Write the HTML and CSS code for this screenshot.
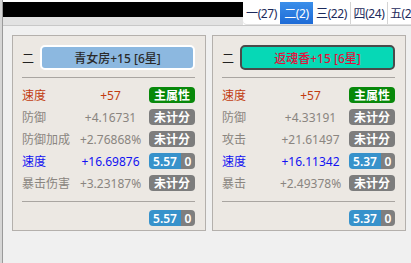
FILE: index.html
```html
<!DOCTYPE html>
<html lang="zh-CN">
<head>
  <meta charset="UTF-8">
  <title>御魂对比</title>
  <link rel="stylesheet" href="styles.css">
</head>
<body>
  <div class="edge"></div>
  <div class="main">
    <!-- 顶部栏 + 页签 -->
    <div class="header">
      <div class="header-left">
        <div class="blackbar"></div>
        <div class="band"></div>
      </div>
      <div class="tabs">
        <div class="tab first">一(27)</div>
        <div class="tab active">二(2)</div>
        <div class="tab">三(22)</div>
        <div class="tab">四(24)</div>
        <div class="tab">五(2</div>
      </div>
    </div>

    <div class="content">
      <div class="card">
        <div class="name-row">
          <span class="pos">二</span>
          <div class="name light">青女房+15 [6星]</div>
        </div>
        <div class="sep"></div>
        <div class="row main-attr">
          <span class="label">速度</span><span class="val">+57</span>
          <span class="badge green">主属性</span>
        </div>
        <div class="row grey">
          <span class="label">防御</span><span class="val">+4.16731</span>
          <span class="badge gray">未计分</span>
        </div>
        <div class="row grey">
          <span class="label">防御加成</span><span class="val">+2.76868%</span>
          <span class="badge gray">未计分</span>
        </div>
        <div class="row blue">
          <span class="label">速度</span><span class="val">+16.69876</span>
          <span class="score"><b>5.57</b><i>0</i></span>
        </div>
        <div class="row grey">
          <span class="label">暴击伤害</span><span class="val">+3.23187%</span>
          <span class="badge gray">未计分</span>
        </div>
        <div class="sep"></div>
        <div class="total">
          <span class="score"><b>5.57</b><i>0</i></span>
        </div>
      </div>

      <div class="card">
        <div class="name-row">
          <span class="pos">二</span>
          <div class="name teal">返魂香+15 [6星]</div>
        </div>
        <div class="sep"></div>
        <div class="row main-attr">
          <span class="label">速度</span><span class="val">+57</span>
          <span class="badge green">主属性</span>
        </div>
        <div class="row grey">
          <span class="label">防御</span><span class="val">+4.33191</span>
          <span class="badge gray">未计分</span>
        </div>
        <div class="row grey">
          <span class="label">攻击</span><span class="val">+21.61497</span>
          <span class="badge gray">未计分</span>
        </div>
        <div class="row blue">
          <span class="label">速度</span><span class="val">+16.11342</span>
          <span class="score"><b>5.37</b><i>0</i></span>
        </div>
        <div class="row grey">
          <span class="label">暴击</span><span class="val">+2.49378%</span>
          <span class="badge gray">未计分</span>
        </div>
        <div class="sep"></div>
        <div class="total">
          <span class="score"><b>5.37</b><i>0</i></span>
        </div>
      </div>
    </div>
  </div>
</body>
</html>
```

FILE: styles.css
```css
body {
  margin: 0;
  height: 263px;
  display: flex;
  background: #f0f0f0;
  font-family: "Noto Sans", "Noto Sans CJK SC", sans-serif;
  font-size: 12px;
  overflow: hidden;
}
.edge {
  width: 2px;
  background: #d6d6d6;
  border-right: 1px solid #9a9a9a;
}
.main {
  flex: 1;
  min-width: 0;
  display: flex;
  flex-direction: column;
}
.header {
  display: flex;
  padding-top: 2px;
  background: #fff;
  border-bottom: 1px solid #c8c8c8;
}
.header-left {
  flex: 1;
  display: flex;
  flex-direction: column;
}
.blackbar {
  height: 15px;
  background: #000;
}
.band {
  height: 8px;
  background: #e2e2e2;
}
.tabs {
  display: flex;
  width: 168px;
  height: 22px;
  overflow: hidden;
  background: #fff;
  border-radius: 0 0 0 4px;
  margin-bottom: 1px;
  box-shadow: 0 1px 0 #e2e2e2;
}
.tab {
  flex: none;
  width: 37px;
  box-sizing: border-box;
  display: flex;
  align-items: center;
  justify-content: center;
  color: #1c2a5c;
  letter-spacing: -0.4px;
  border-left: 1px solid #d4d4d4;
  white-space: nowrap;
}
.tab:last-child {
  justify-content: flex-start;
  padding-left: 2px;
}
.tab.first {
  border-left: none;
  width: 37px;
}
.tab.active {
  width: 33px;
  color: #fff;
  border-left: none;
  background: linear-gradient(#3b8fea, #1d6ad6);
}
.tab.active + .tab {
  border-left: none;
}
.content {
  display: flex;
  gap: 6px;
  padding: 9px 0 0 9px;
}
.card {
  width: 173px;
  height: 194px;
  padding: 0 10px 0 9px;
  background: #ece8e3;
  border: 1px solid #b4b0ac;
}
.name-row {
  display: flex;
  align-items: center;
  gap: 6px;
  margin-top: 9px;
}
.pos {
  color: #222;
}
.name {
  flex: 1;
  height: 21px;
  display: flex;
  align-items: center;
  justify-content: center;
  border-radius: 5px;
  font-weight: 500;
}
.name.light {
  background: #8cb8e0;
  border: 2px solid #fff;
  color: #2a2a2a;
}
.name.teal {
  background: #06d8b6;
  border: 2px solid #4a4a4a;
  color: #e2103c;
}
.sep {
  height: 1px;
  background: #a9a5a1;
  margin-top: 7px;
}
.row {
  display: grid;
  grid-template-columns: 50px 1fr 46px;
  align-items: center;
  height: 22px;
}
.sep + .row {
  margin-top: 6px;
}
.val {
  text-align: center;
}
.main-attr { color: #c23c10; }
.grey { color: #8a8580; }
.blue { color: #1212f2; }
.badge,
.score {
  height: 16px;
  border-radius: 4px;
  color: #fff;
  font-weight: 600;
  display: flex;
  align-items: center;
  justify-content: center;
  width: 46px;
}
.green { background: #08880a; }
.gray { background: #7d7d7d; }
.score {
  overflow: hidden;
  justify-content: stretch;
}
.score b,
.score i {
  font-style: normal;
  font-weight: 600;
  height: 100%;
  display: flex;
  align-items: center;
  justify-content: center;
}
.score b {
  width: 32px;
  background: #3792cb;
}
.score i {
  flex: 1;
  background: #7f7f7f;
}
.total {
  display: flex;
  justify-content: flex-end;
  margin-top: 8px;
}
```
